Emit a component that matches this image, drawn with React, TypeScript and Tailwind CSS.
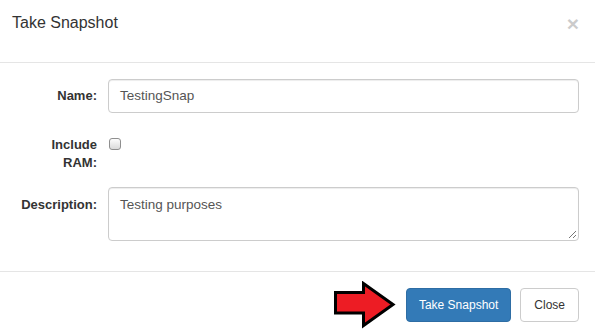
import React from "react";

export default function App() {
  return (
    <div className="w-[595px] h-[336px] bg-white text-[#333] font-['Liberation_Sans',Arial,sans-serif] overflow-hidden flex flex-col">
      {/* Header */}
      <div className="h-[63px] border-b border-[#e5e5e5] flex items-start justify-between pl-[12px] pr-[16px] pt-[11px]">
        <div className="text-[16px] leading-[24px] text-[#333]">Take Snapshot</div>
        <div className="h-[24px] flex items-center text-[21px] font-bold leading-none text-black opacity-20">×</div>
      </div>

      {/* Body */}
      <div className="pt-[16px] pr-[16px] h-[208px]">
        {/* Name */}
        <div className="flex items-center gap-[11px] h-[34px]">
          <div className="w-[97px] text-right text-[13px] font-bold">Name:</div>
          <div className="flex-1 h-[34px] border border-[#ccc] rounded-[4px] shadow-[inset_0_1px_1px_rgba(0,0,0,0.075)] flex items-center px-[11px] text-[13.5px] text-[#555]">
            TestingSnap
          </div>
        </div>

        {/* Include RAM */}
        <div className="flex items-start gap-[11px] mt-[15px] h-[44px]">
          <div className="w-[97px] text-right text-[13px] font-bold leading-[18px] pt-[8px]">
            Include
            <br />
            RAM:
          </div>
          <div className="mt-[10px] ml-[1px] w-[12px] h-[12px] rounded-[3px] border border-[#8f8f8f] bg-gradient-to-b from-[#fdfdfd] to-[#dadada]" />
        </div>

        {/* Description */}
        <div className="flex items-start gap-[11px] mt-[15px]">
          <div className="w-[97px] text-right text-[13px] font-bold leading-[18px] pt-[9px]">Description:</div>
          <div className="relative flex-1 h-[54px] border border-[#ccc] rounded-[4px] shadow-[inset_0_1px_1px_rgba(0,0,0,0.075)] px-[11px] pt-[8px] text-[13.5px] leading-[18px] text-[#555]">
            Testing purposes
            <svg className="absolute right-[1px] bottom-[1px]" width="9" height="9" viewBox="0 0 9 9">
              <line x1="8" y1="1" x2="1" y2="8" stroke="#777" strokeWidth="1" />
              <line x1="8" y1="5" x2="5" y2="8" stroke="#777" strokeWidth="1" />
            </svg>
          </div>
        </div>
      </div>

      {/* Footer */}
      <div className="flex-1 border-t border-[#e5e5e5] flex items-start justify-end pt-[16px] pr-[16px]">
        <div className="h-[34px] flex items-center">
          <svg width="66" height="50" viewBox="0 0 66 50" className="mr-[8px] mt-[2px]">
            <polygon
              points="3.5,11.5 31.5,11.5 31.5,2.5 61,23.5 31.5,44.5 31.5,32 3.5,32"
              fill="#ed1c24"
              stroke="#000"
              strokeWidth="3"
              strokeLinejoin="miter"
            />
          </svg>
          <div className="h-[34px] px-[12px] flex items-center rounded-[4px] bg-[#337ab7] border border-[#2e6da4] text-white text-[12px]">
            Take Snapshot
          </div>
          <div className="ml-[9px] h-[34px] px-[13px] flex items-center rounded-[4px] bg-white border border-[#ccc] text-[#333] text-[12px]">
            Close
          </div>
        </div>
      </div>
    </div>
  );
}
